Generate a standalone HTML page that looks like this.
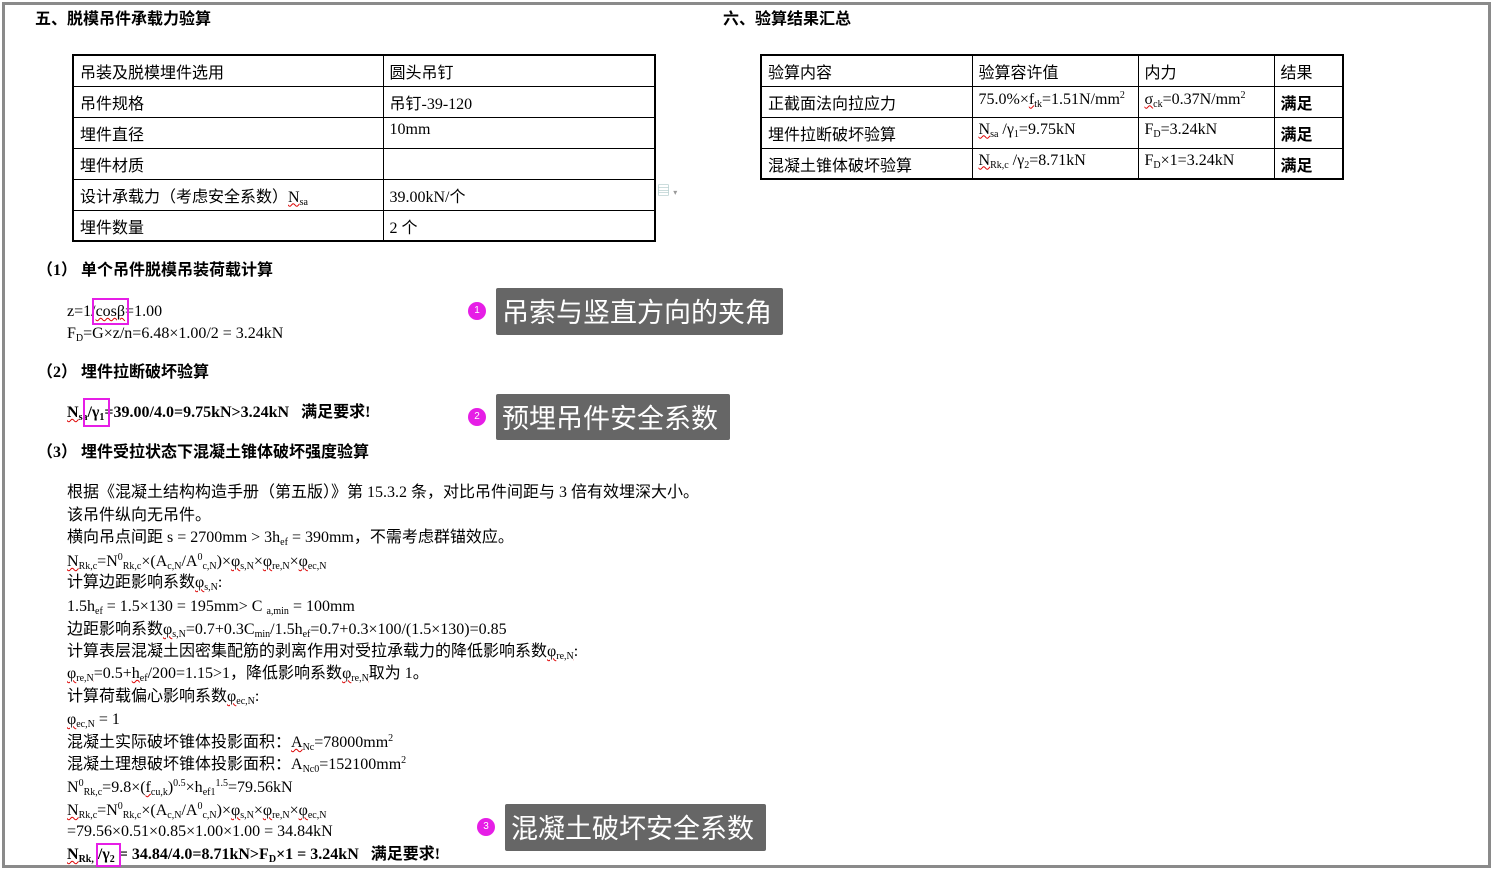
<!DOCTYPE html>
<html><head><meta charset="utf-8"><style>
*{margin:0;padding:0;box-sizing:border-box}
body{width:1494px;height:871px;background:#fff;position:relative;overflow:hidden;font-family:"Liberation Serif","Noto Serif CJK SC","Noto Sans CJK SC",serif;color:#000;font-size:16px}
.frame{position:absolute;left:2px;top:2px;width:1489px;height:866px;border:3px solid #8a8a8a}
.t{position:absolute;white-space:nowrap;line-height:1}
.cjk{font-family:"Liberation Serif","Noto Sans CJK SC",sans-serif}
.h{font-weight:bold;font-size:16px;font-family:"Liberation Serif","Noto Sans CJK SC",sans-serif}
table{position:absolute;border-collapse:collapse;border:2px solid #000}
td{border:1px solid #000;font-size:16px;padding:0 6px;vertical-align:top;padding-top:3px;height:31px;font-family:"Liberation Serif","Noto Sans CJK SC",sans-serif;white-space:nowrap}
sub{font-size:10px;vertical-align:-3px}
sup{font-size:10px;vertical-align:6px}
.w{text-decoration:underline wavy #d00;text-decoration-thickness:1px}
.box{position:absolute;border:2px solid #e61ee6}
.cal{position:absolute;background:#666;color:#fff;font-family:"Noto Sans CJK SC",sans-serif;font-size:27px;line-height:46px;padding-left:6px;border-radius:2px;white-space:nowrap}
.dot{position:absolute;width:18px;height:18px;border-radius:50%;background:#e61ee6;color:#fff;font-size:10px;text-align:center;line-height:18px;font-family:"Liberation Sans",sans-serif}
b{font-weight:bold}
</style></head><body>
<div class="frame"></div>
<div class="t h" style="left:35px;top:12px">五、脱模吊件承载力验算</div>
<div class="t h" style="left:723px;top:12px">六、验算结果汇总</div>

<table style="left:72px;top:54px;width:584px">
<tr><td style="width:310px">吊装及脱模埋件选用</td><td>圆头吊钉</td></tr>
<tr><td>吊件规格</td><td>吊钉-39-120</td></tr>
<tr><td>埋件直径</td><td>10mm</td></tr>
<tr><td>埋件材质</td><td></td></tr>
<tr><td>设计承载力（考虑安全系数）<span class="w">N<sub>sa</sub></span></td><td>39.00kN/个</td></tr>
<tr><td>埋件数量</td><td>2 个</td></tr>
</table>
<div class="t" style="left:657px;top:184px;color:#9bb;font-size:13px">▤ <span style="font-size:8px;color:#999">▾</span></div>

<table style="left:760px;top:54px;width:584px">
<tr><td style="width:211px">验算内容</td><td style="width:166px">验算容许值</td><td style="width:136px">内力</td><td>结果</td></tr>
<tr><td>正截面法向拉应力</td><td>75.0%×<span class="w">f<sub>tk</sub></span>=1.51N/mm<sup>2</sup></td><td><span class="w">σ<sub>ck</sub></span>=0.37N/mm<sup>2</sup></td><td><b>满足</b></td></tr>
<tr><td>埋件拉断破坏验算</td><td><span class="w">N<sub>sa</sub></span> /γ<sub>1</sub>=9.75kN</td><td>F<sub>D</sub>=3.24kN</td><td><b>满足</b></td></tr>
<tr><td>混凝土锥体破坏验算</td><td><span class="w">N<sub>Rk,c</sub></span> /γ<sub>2</sub>=8.71kN</td><td>F<sub>D</sub>×1=3.24kN</td><td><b>满足</b></td></tr>
</table>

<div class="t h" style="left:37px;top:263px">（1） 单个吊件脱模吊装荷载计算</div>
<div class="t" style="left:67px;top:304px">z=1/<span class="w">cosβ</span>=1.00</div>
<div class="t" style="left:67px;top:326px">F<sub>D</sub>=G×z/n=6.48×1.00/2 = 3.24kN</div>
<div class="box" style="left:92px;top:298px;width:37px;height:27px"></div>

<div class="t h" style="left:37px;top:365px">（2） 埋件拉断破坏验算</div>
<div class="t" style="left:67px;top:405px;font-weight:bold"><span class="w">N<sub>sa</sub></span>/γ<sub>1</sub>=39.00/4.0=9.75kN&gt;3.24kN &nbsp;&nbsp;<span class="cjk">满足要求!</span></div>
<div class="box" style="left:83px;top:398px;width:27px;height:29px"></div>

<div class="t h" style="left:37px;top:445px">（3） 埋件受拉状态下混凝土锥体破坏强度验算</div>
<div class="cjk">
<div class="t" style="left:67px;top:485px">根据《混凝土结构构造手册（第五版）》第 15.3.2 条，对比吊件间距与 3 倍有效埋深大小。</div>
<div class="t" style="left:67px;top:508px">该吊件纵向无吊件。</div>
<div class="t" style="left:67px;top:530px">横向吊点间距 s = 2700mm &gt; 3h<sub>ef</sub> = 390mm，不需考虑群锚效应。</div>
<div class="t" style="left:67px;top:553px"><span class="w">N<sub>Rk,c</sub></span>=N<sup>0</sup><sub>Rk,c</sub>×(A<sub>c,N</sub>/A<sup>0</sup><sub>c,N</sub>)×<span class="w">φ<sub>s,N</sub></span>×<span class="w">φ<sub>re,N</sub></span>×<span class="w">φ<sub>ec,N</sub></span></div>
<div class="t" style="left:67px;top:575px">计算边距影响系数<span class="w">φ<sub>s,N</sub></span>:</div>
<div class="t" style="left:67px;top:599px">1.5h<sub>ef</sub> = 1.5×130 = 195mm&gt; C <sub>a,min</sub> = 100mm</div>
<div class="t" style="left:67px;top:622px">边距影响系数<span class="w">φ<sub>s,N</sub></span>=0.7+0.3C<sub>min</sub>/1.5h<sub>ef</sub>=0.7+0.3×100/(1.5×130)=0.85</div>
<div class="t" style="left:67px;top:644px">计算表层混凝土因密集配筋的剥离作用对受拉承载力的降低影响系数<span class="w">φ<sub>re,N</sub></span>:</div>
<div class="t" style="left:67px;top:666px"><span class="w">φ<sub>re,N</sub></span>=0.5+<span class="w">h<sub>ef</sub></span>/200=1.15&gt;1，降低影响系数<span class="w">φ<sub>re,N</sub></span>取为 1。</div>
<div class="t" style="left:67px;top:689px">计算荷载偏心影响系数<span class="w">φ<sub>ec,N</sub></span>:</div>
<div class="t" style="left:67px;top:712px"><span class="w">φ<sub>ec,N</sub></span> = 1</div>
<div class="t" style="left:67px;top:734px">混凝土实际破坏锥体投影面积：<span class="w">A<sub>Nc</sub></span>=78000mm<sup>2</sup></div>
<div class="t" style="left:67px;top:756px">混凝土理想破坏锥体投影面积：A<sub>Nc0</sub>=152100mm<sup>2</sup></div>
<div class="t" style="left:67px;top:779px">N<sup>0</sup><sub>Rk,c</sub>=9.8×(<span class="w">f<sub>cu,k</sub></span>)<sup>0.5</sup>×h<sub>ef1</sub><sup>1.5</sup>=79.56kN</div>
<div class="t" style="left:67px;top:802px"><span class="w">N<sub>Rk,c</sub></span>=N<sup>0</sup><sub>Rk,c</sub>×(A<sub>c,N</sub>/A<sup>0</sup><sub>c,N</sub>)×<span class="w">φ<sub>s,N</sub></span>×<span class="w">φ<sub>re,N</sub></span>×<span class="w">φ<sub>ec,N</sub></span></div>
<div class="t" style="left:67px;top:824px">=79.56×0.51×0.85×1.00×1.00 = 34.84kN</div>
<div class="t" style="left:67px;top:847px;font-weight:bold"><span class="w">N<sub>Rk,</sub></span> /γ<sub>2</sub> = 34.84/4.0=8.71kN&gt;F<sub>D</sub>×1 = 3.24kN &nbsp;&nbsp;满足要求!</div>
</div>
<div class="box" style="left:96px;top:843px;width:25px;height:24px"></div>

<div class="dot" style="left:468px;top:302px">1</div>
<div class="cal" style="left:496px;top:288px;width:287px;height:47px">吊索与竖直方向的夹角</div>
<div class="dot" style="left:468px;top:408px">2</div>
<div class="cal" style="left:496px;top:394px;width:234px;height:46px">预埋吊件安全系数</div>
<div class="dot" style="left:477px;top:818px">3</div>
<div class="cal" style="left:505px;top:804px;width:261px;height:47px">混凝土破坏安全系数</div>
</body></html>
